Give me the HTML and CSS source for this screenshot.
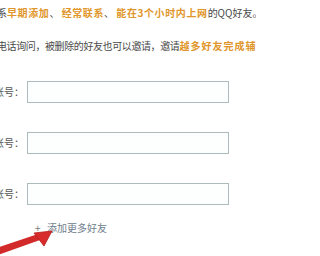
FILE: index.html
```html
<!DOCTYPE html>
<html lang="zh">
<head>
<meta charset="utf-8">
<link rel="stylesheet" href="styles.css">
</head>
<body>
<div class="frame">
<div class="page">
  <p class="line line1">系<span class="hl">早期添加</span>、 <span class="hl">经常联系</span>、 <span class="hl">能在3个小时内上网</span>的QQ好友。</p>
  <p class="line line2">电话询问，被删除的好友也可以邀请，邀请<span class="hl">越多好友完成辅助</span></p>
  <div class="form">
    <div class="row"><span class="label">账号：</span><span class="input"></span></div>
    <div class="row"><span class="label">账号：</span><span class="input"></span></div>
    <div class="row"><span class="label">账号：</span><span class="input"></span></div>
    <div class="more"><span class="plus">+</span><span class="more-text">添加更多好友</span></div>
  </div>
</div>
<svg class="arrow" width="60" height="40" viewBox="0 0 60 40">
  <polygon points="-4,32 38,18 40,24 -2,39" fill="#d22a2a"/>
  <polygon points="52,15 34,17 44,30" fill="#d82c2c" stroke="#b81e1e" stroke-width="0.8"/>
</svg>
</div>
</body>
</html>
```
FILE: styles.css
```css
html, body {
  margin: 0;
  padding: 0;
  background: #ffffff;
}
.frame {
  position: relative;
  width: 256px;
  height: 256px;
  overflow: hidden;
}
.page {
  margin-left: -6px;
  width: 262px;
  overflow: hidden;
  font-family: "Noto Sans CJK SC", "Noto Sans", sans-serif;
  font-size: 10px;
  color: #4a4a4a;
}
.line {
  margin: 0;
  padding-left: 3px;
  line-height: 20px;
  white-space: nowrap;
  overflow: hidden;
}
.line1 {
  padding-top: 3px;
}
.line2 {
  margin-top: 13px;
  letter-spacing: -0.4px;
}
.hl {
  color: #e0962a;
  font-weight: bold;
  letter-spacing: 0.6px;
}
.line2 .hl {
  letter-spacing: 1px;
}
.form {
  display: flex;
  flex-direction: column;
  gap: 29px;
  padding-top: 25px;
}
.row {
  display: flex;
  align-items: center;
  height: 22px;
}
.label {
  width: 30px;
  white-space: nowrap;
  color: #555555;
  line-height: 22px;
}
.input {
  margin-left: 3px;
  width: 200px;
  height: 20px;
  border: 1px solid #aebbbd;
  background: #fdfefe;
}
.more {
  display: flex;
  align-items: center;
  margin-top: -14px;
  padding-left: 41px;
  height: 14px;
  color: #6e7d8c;
  white-space: nowrap;
}
.plus {
  width: 12px;
  color: #777777;
}
.arrow {
  position: absolute;
  left: 0;
  top: 216px;
}
```
